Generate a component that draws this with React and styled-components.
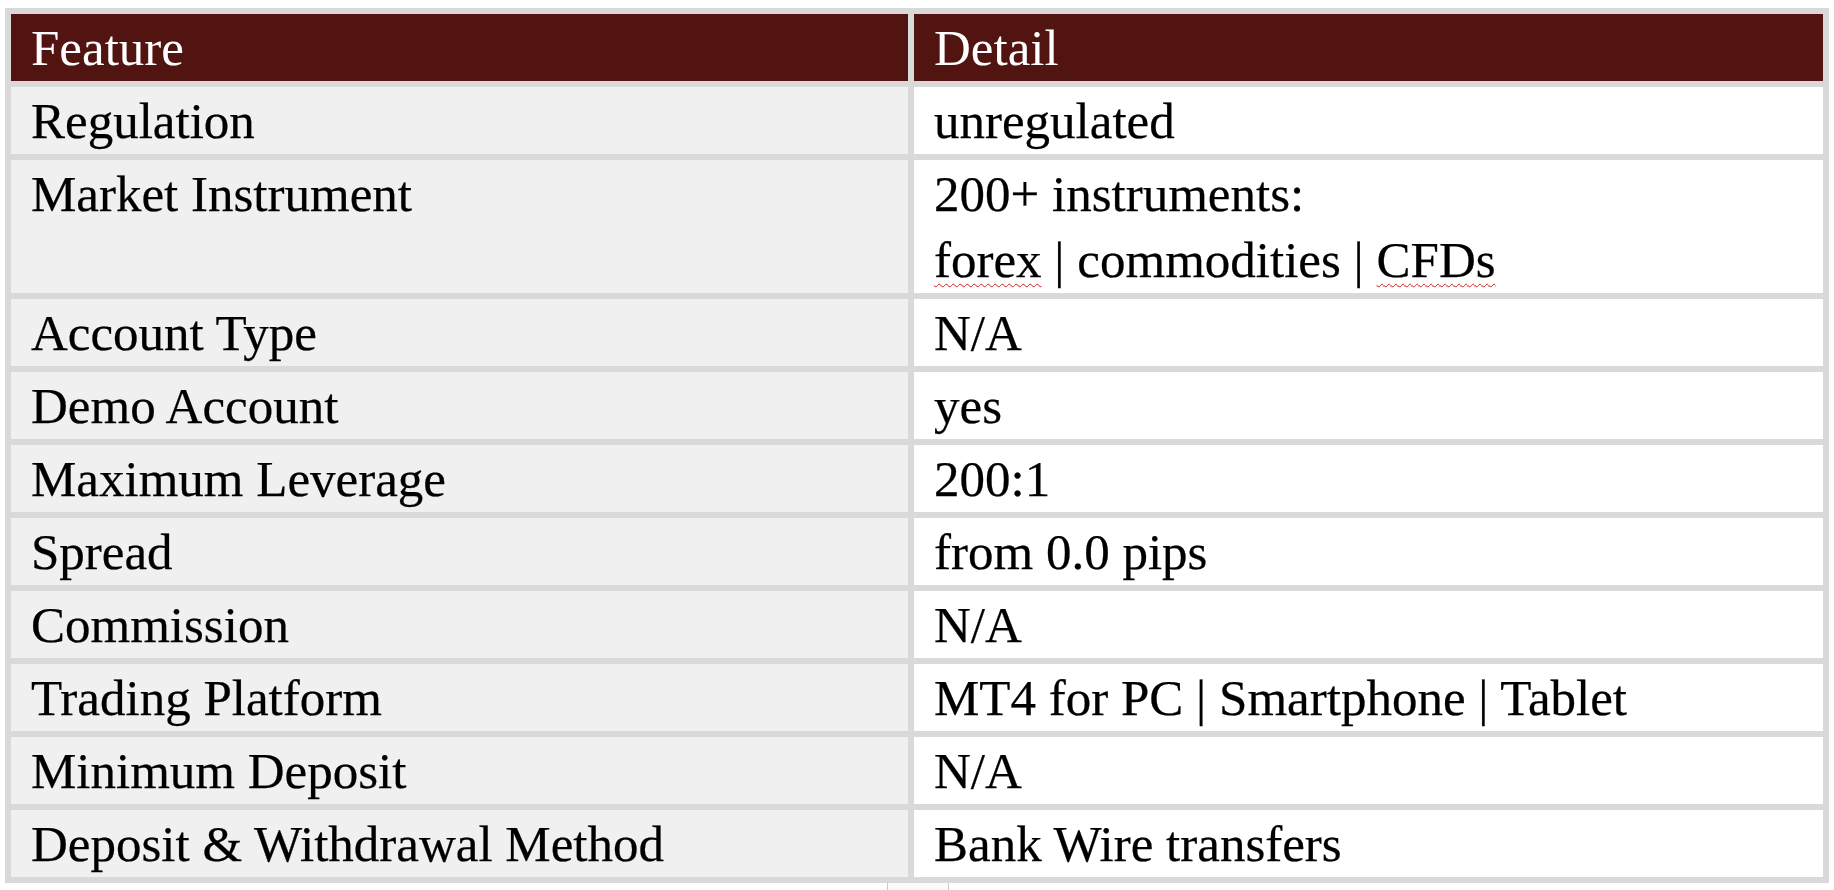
import React from "react";
import styled, { createGlobalStyle } from "styled-components";

const Global = createGlobalStyle`
  html, body { margin: 0; padding: 0; background: #ffffff; }
  body { font-family: "Liberation Serif", "Times New Roman", serif; }
`;

const Page = styled.div`
  padding: 8px 0 0 5px;
  display: flex;
  flex-direction: column;
  align-items: flex-start;
`;

const Table = styled.table`
  width: 1824px;
  table-layout: fixed;
  border-collapse: separate;
  border-spacing: 6px;
  background: #d9d9d9;
  font-family: "Liberation Serif", "Times New Roman", serif;
  font-size: 51px;
  line-height: 66px;
  color: #000;
`;

const HeadCell = styled.th`
  background: #521410;
  color: #ffffff;
  font-weight: 400;
  text-align: left;
  vertical-align: top;
  padding: 1px 0 0 20px;
  white-space: nowrap;
`;

const Cell = styled.td`
  background: ${(p) => (p.$shaded ? "#f0f0f0" : "#ffffff")};
  text-align: left;
  vertical-align: top;
  padding: 1px 0 0 20px;
  white-space: nowrap;
  -webkit-text-stroke: 0.25px #000;
`;

const Line = styled.div``;

const Misspelled = styled.span`
  text-decoration: underline wavy #d02020;
  text-decoration-thickness: 1px;
  text-underline-offset: 6px;
`;

const Handle = styled.div`
  margin: 0 0 0 882px;
  width: 60px;
  height: 7px;
  border-left: 1px solid #c8c8c8;
  border-right: 1px solid #c8c8c8;
  background: #fafafa;
`;

const rows = [
  ["Regulation", "unregulated"],
  [
    "Market Instrument",
    <>
      <Line>200+ instruments:</Line>
      <Line>
        <Misspelled>forex</Misspelled> | commodities | <Misspelled>CFDs</Misspelled>
      </Line>
    </>,
  ],
  ["Account Type", "N/A"],
  ["Demo Account", "yes"],
  ["Maximum Leverage", "200:1"],
  ["Spread", "from 0.0 pips"],
  ["Commission", "N/A"],
  ["Trading Platform", "MT4 for PC | Smartphone | Tablet"],
  ["Minimum Deposit", "N/A"],
  ["Deposit & Withdrawal Method", "Bank Wire transfers"],
];

export default function App() {
  return (
    <>
      <Global />
      <Page>
        <Table>
          <colgroup>
            <col style={{ width: 897 }} />
            <col style={{ width: 909 }} />
          </colgroup>
          <thead>
            <tr>
              <HeadCell>Feature</HeadCell>
              <HeadCell>Detail</HeadCell>
            </tr>
          </thead>
          <tbody>
            {rows.map(([feature, detail], i) => (
              <tr key={i}>
                <Cell $shaded>{feature}</Cell>
                <Cell>{detail}</Cell>
              </tr>
            ))}
          </tbody>
        </Table>
        <Handle />
      </Page>
    </>
  );
}
